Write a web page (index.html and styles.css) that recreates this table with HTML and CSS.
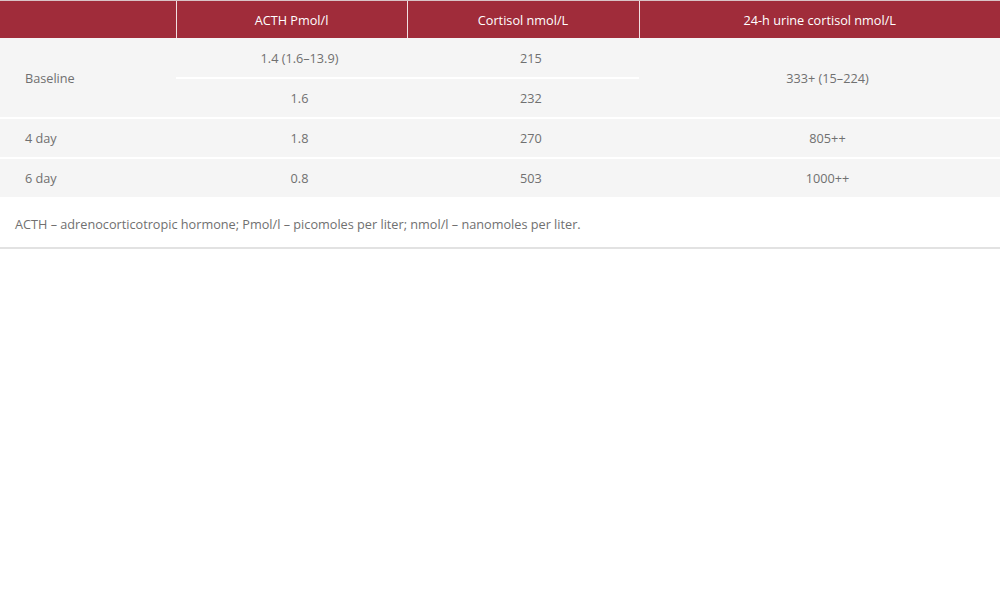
FILE: index.html
```html
<!DOCTYPE html>
<html>
<head>
<meta charset="utf-8">
<link rel="stylesheet" href="styles.css">
</head>
<body>
<div class="wrap">
  <table class="data">
    <colgroup>
      <col class="c1"><col class="c2"><col class="c3"><col class="c4">
    </colgroup>
    <thead>
      <tr>
        <th></th>
        <th>ACTH Pmol/l</th>
        <th>Cortisol nmol/L</th>
        <th>24-h urine cortisol nmol/L</th>
      </tr>
    </thead>
    <tbody>
      <tr class="split">
        <td rowspan="2" class="label">Baseline</td>
        <td class="inner">1.4 (1.6–13.9)</td>
        <td class="inner">215</td>
        <td rowspan="2">333+ (15–224)</td>
      </tr>
      <tr>
        <td>1.6</td>
        <td>232</td>
      </tr>
      <tr>
        <td class="label">4 day</td>
        <td>1.8</td>
        <td>270</td>
        <td>805++</td>
      </tr>
      <tr>
        <td class="label">6 day</td>
        <td>0.8</td>
        <td>503</td>
        <td>1000++</td>
      </tr>
    </tbody>
  </table>
  <p class="note">ACTH – adrenocorticotropic hormone; Pmol/l – picomoles per liter; nmol/l – nanomoles per liter.</p>
</div>
</body>
</html>
```

FILE: styles.css
```css
html, body {
  margin: 0;
  padding: 0;
  background: #ffffff;
}
body {
  font-family: "Open Sans", "Liberation Sans", sans-serif;
  font-size: 12.7px;
  color: #707070;
}
.wrap {
  width: 1000px;
  border-bottom: 2px solid #e2e2e2;
}
.data {
  width: 1000px;
  border-collapse: collapse;
  table-layout: fixed;
  background: #f5f5f5;
}
.c1 { width: 176px; }
.c2 { width: 231px; }
.c3 { width: 232px; }
.c4 { width: 361px; }
.data th {
  background: #a02c3a;
  color: #ffffff;
  font-weight: 400;
  height: 37px;
  padding: 0;
  text-align: center;
  border-left: 1px solid #f2dfe1;
  border-top: 1px solid #d9c3c6;
}
.data th:first-child {
  border-left: none;
}
.data td {
  height: 38px;
  padding: 0 0 0 16px;
  text-align: center;
  border-top: 2px solid #ffffff;
}
.data thead + tbody tr:first-child td {
  border-top: none;
  height: 39px;
}
.data td.label {
  text-align: left;
  padding-left: 25px;
}
.data td.inner {
  border-bottom: 2px solid #ffffff;
}
.note {
  margin: 0;
  padding: 18px 0 0 15px;
  height: 32px;
}
```
